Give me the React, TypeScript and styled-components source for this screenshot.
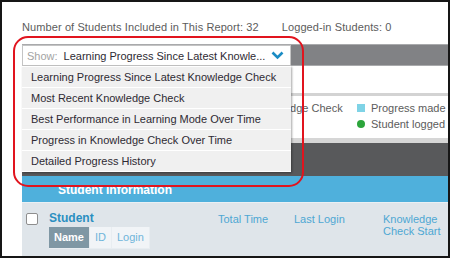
import React from 'react';
import styled, { createGlobalStyle } from 'styled-components';

const GlobalStyle = createGlobalStyle`
  html, body {
    margin: 0;
    padding: 0;
    background: #ffffff;
  }
  body {
    font-family: "Liberation Sans", Arial, sans-serif;
    font-size: 11px;
  }
`;

const views = [
  'Learning Progress Since Latest Knowledge Check',
  'Most Recent Knowledge Check',
  'Best Performance in Learning Mode Over Time',
  'Progress in Knowledge Check Over Time',
  'Detailed Progress History'
];

const Frame = styled.div`
  position: relative;
  width: 450px;
  height: 258px;
  box-sizing: border-box;
  border: 2px solid #161616;
  overflow: hidden;
  background: #fff;
  padding-left: 20px;
`;

const Stats = styled.div`
  display: flex;
  gap: 23px;
  margin-top: 17px;
  height: 16px;
  line-height: 16px;
  color: #5c5c5c;
  letter-spacing: 0.1px;
  white-space: nowrap;
`;

const Toolbar = styled.div`
  display: flex;
  align-items: flex-end;
  margin-top: 9px;
  height: 22px;
  box-sizing: border-box;
  background: #818285;
  border-top: 1px solid #a9aaac;
  border-bottom: 1px solid #a9aaac;
`;

const SelectWrap = styled.div`
  position: relative;
  width: 269px;
  height: 21px;
  margin-bottom: -1px;
`;

const SelectBox = styled.div`
  display: flex;
  align-items: center;
  height: 100%;
  box-sizing: border-box;
  padding: 0 6px 0 4px;
  background: #fff;
  border: 1px solid #c4c4c4;
  white-space: nowrap;
`;

const SelectLabel = styled.span`
  color: #a3a3a3;
  margin-right: 6px;
`;

const SelectValue = styled.span`
  color: #2e2a33;
  flex: 1;
`;

const Menu = styled.ul`
  position: absolute;
  top: 100%;
  left: 0;
  width: 100%;
  margin: 0;
  padding: 1px 0;
  list-style: none;
  display: flex;
  flex-direction: column;
  gap: 1px;
  background: #fff;
  box-shadow: 1px 1px 2px rgba(0, 0, 0, 0.35);
  z-index: 2;
`;

const MenuItem = styled.li`
  height: 20px;
  line-height: 20px;
  padding-left: 9px;
  background: #f0f0f0;
  color: #2e2a33;
  white-space: nowrap;
`;

const Panel = styled.div`
  height: 72px;
  padding-top: 27px;
  box-sizing: border-box;
`;

const TabLine = styled.div`
  height: 3px;
  background: #d3d3d3;
`;

const Legend = styled.div`
  display: grid;
  grid-template-columns: 117px auto;
  grid-auto-rows: 16px;
  margin-top: 4px;
  padding-left: 218px;
  color: #5c5c5c;
  white-space: nowrap;
`;

const LegendItem = styled.div`
  display: flex;
  align-items: center;
  gap: 6px;
`;

const Swatch = styled.span<{ color: string; round?: boolean }>`
  width: 8px;
  height: 8px;
  background: ${(p) => p.color};
  border-radius: ${(p) => (p.round ? '50%' : '0')};
`;

const Band = styled.div<{ h: number; bg: string }>`
  height: ${(p) => p.h}px;
  background: ${(p) => p.bg};
`;

const SectionBar = styled.div`
  height: 26px;
  line-height: 28px;
  padding-left: 36px;
  background: #4fb0dc;
  color: #fff;
  font-weight: bold;
  font-size: 12px;
`;

const Header = styled.div`
  display: grid;
  grid-template-columns: 12px 180px 76px 89px auto;
  height: 60px;
  padding: 8px 0 0 4px;
  box-sizing: border-box;
  background: #dfe5ea;
  border-top: 1px solid #eaf0f4;
  color: #4ea7d3;
  align-items: start;
`;

const Check = styled.span`
  margin-top: 2px;
  width: 12px;
  height: 12px;
  box-sizing: border-box;
  background: #fff;
  border: 1px solid #8e8e8e;
  border-radius: 2px;
`;

const StudentCol = styled.div`
  padding-left: 11px;
  display: flex;
  flex-direction: column;
  gap: 2px;
`;

const StudentTitle = styled.span`
  font-size: 12px;
  font-weight: bold;
  line-height: 14px;
  color: #2a8fc1;
`;

const Tabs = styled.div`
  display: flex;
  gap: 1px;
  width: max-content;
  background: #e8edf1;
  padding: 0 1px 1px 0;
`;

const Tab = styled.span<{ active?: boolean }>`
  height: 21px;
  line-height: 21px;
  padding: 0 ${(p) => (p.active ? 5 : 5)}px;
  background: ${(p) => (p.active ? '#7f97a4' : '#f1f4f7')};
  color: ${(p) => (p.active ? '#fff' : '#6fb4da')};
  font-weight: ${(p) => (p.active ? 'bold' : 'normal')};
`;

const ColTitle = styled.span`
  line-height: 12px;
  padding-top: 2px;
`;

const Annotation = styled.div`
  position: absolute;
  left: 11px;
  top: 34px;
  width: 291px;
  height: 151px;
  box-sizing: border-box;
  border: 2px solid #e1141e;
  border-radius: 15px;
  z-index: 3;
  pointer-events: none;
`;

const Chevron = () => (
  <svg width="13" height="9" viewBox="0 0 13 9">
    <polyline points="1.5,1.5 6.5,6.5 11.5,1.5" fill="none" stroke="#1b8cc4" strokeWidth="2.6" />
  </svg>
);

export default function App() {
  return (
    <>
      <GlobalStyle />
      <Frame>
        <Stats>
          <span>Number of Students Included in This Report: 32</span>
          <span>Logged-in Students: 0</span>
        </Stats>
        <Toolbar>
          <SelectWrap>
            <SelectBox>
              <SelectLabel>Show:</SelectLabel>
              <SelectValue>Learning Progress Since Latest Knowle...</SelectValue>
              <Chevron />
            </SelectBox>
            <Menu>
              {views.map((v) => (
                <MenuItem key={v}>{v}</MenuItem>
              ))}
            </Menu>
          </SelectWrap>
        </Toolbar>
        <Panel>
          <TabLine />
          <Legend>
            <LegendItem>
              <Swatch color="#f2a33a" />
              Knowledge Check
            </LegendItem>
            <LegendItem>
              <Swatch color="#7fd3e6" />
              Progress made in Learning Mode
            </LegendItem>
            <span />
            <LegendItem>
              <Swatch color="#2ca53b" round />
              Student logged in
            </LegendItem>
          </Legend>
        </Panel>
        <Band h={5} bg="#d6d6d6" />
        <Band h={33} bg="#58595b" />
        <SectionBar>Student Information</SectionBar>
        <Header>
          <Check />
          <StudentCol>
            <StudentTitle>Student</StudentTitle>
            <Tabs>
              <Tab active>Name</Tab>
              <Tab>ID</Tab>
              <Tab>Login</Tab>
            </Tabs>
          </StudentCol>
          <ColTitle>Total Time</ColTitle>
          <ColTitle>Last Login</ColTitle>
          <ColTitle>
            Knowledge
            <br />
            Check Start
          </ColTitle>
        </Header>
        <Annotation />
      </Frame>
    </>
  );
}
